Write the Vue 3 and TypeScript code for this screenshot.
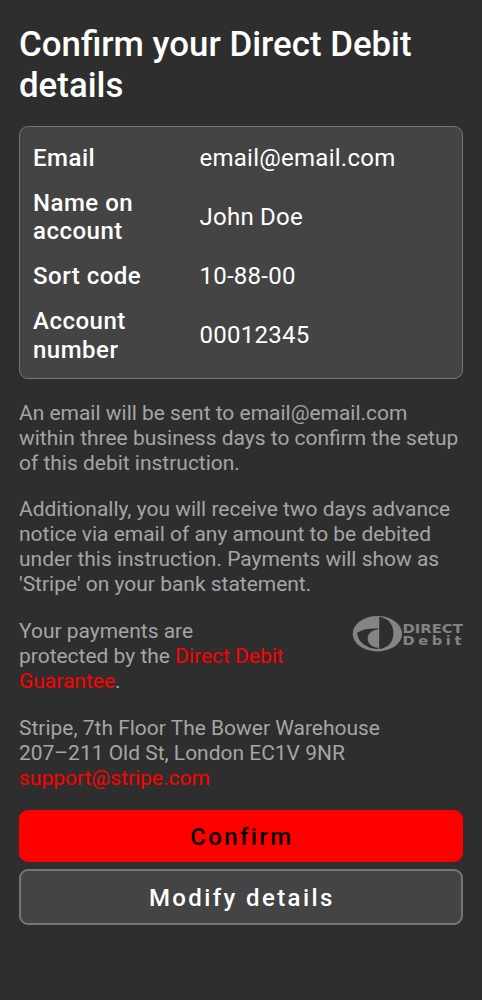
<script setup lang="ts">
interface Detail {
  label: string
  value: string
}

const details: Detail[] = [
  { label: 'Email', value: 'email@email.com' },
  { label: 'Name on account', value: 'John Doe' },
  { label: 'Sort code', value: '10-88-00' },
  { label: 'Account number', value: '00012345' },
]
</script>

<template>
  <main class="page">
    <h1 class="title">Confirm your Direct Debit details</h1>

    <dl class="card">
      <div v-for="d in details" :key="d.label" class="row">
        <dt>{{ d.label }}</dt>
        <dd>{{ d.value }}</dd>
      </div>
    </dl>

    <p class="text">
      An email will be sent to email@email.com<br />within three business days to confirm the setup<br />of this debit instruction.
    </p>
    <p class="text">
      Additionally, you will receive two days advance<br />notice via email of any amount to be debited<br />under this instruction. Payments will show as<br />'Stripe' on your bank statement.
    </p>

    <div class="guarantee">
      <p class="text">
        Your payments are<br />protected by the <a>Direct Debit<br />Guarantee</a>.
      </p>
      <svg class="logo" width="118" height="40" viewBox="0 0 118 40" role="img" aria-label="Direct Debit">
        <ellipse cx="26.4" cy="17.7" rx="24.7" ry="17.7" fill="#848484" />
        <path d="M28.2 .8C37.5 2 42.4 9 42.4 17.5C42.4 26 37 32 28.2 33Z" fill="#2e2e2e" />
        <path d="M6.1 16.8C11 13.3 19 12 27.2 12.6V13.4C20.6 14 16.7 17.5 16.7 22.5C16.7 27.5 20.6 31.2 27.2 31.8V33C16 33 6.6 26 6.1 16.8Z" fill="#2e2e2e" />
        <text class="direct" x="51.5" y="16.6" textLength="60.3" lengthAdjust="spacingAndGlyphs">DIRECT</text>
        <text class="debit" transform="translate(51.5 28.8) scale(1.2 1)">Debit</text>
      </svg>
    </div>

    <p class="text">
      Stripe, 7th Floor The Bower Warehouse<br />207–211 Old St, London EC1V 9NR<br /><a>support@stripe.com</a>
    </p>

    <div class="actions">
      <button class="btn primary" type="button">Confirm</button>
      <button class="btn secondary" type="button">Modify details</button>
    </div>
  </main>
</template>

<style>
html,
body {
  background: #2e2e2e;
}
body {
  margin: 0;
}
</style>

<style scoped>
.page {
  box-sizing: border-box;
  min-height: 1000px;
  padding: 24px 19px 0;
  background: #2e2e2e;
  color: #fff;
  font-family: Roboto, 'Liberation Sans', sans-serif;
}
.title {
  margin: 0 0 20px;
  font-size: 34.85px;
  line-height: 41px;
  font-weight: 500;
}
.card {
  box-sizing: border-box;
  height: 252.5px;
  margin: 0 0 22.2px;
  padding: 17px 13px;
  border: 1px solid #74747b;
  border-radius: 9px;
  background: #444;
  display: flex;
  flex-direction: column;
  gap: 16px;
  font-size: 24px;
  line-height: 28.7px;
}
.row {
  display: grid;
  grid-template-columns: 150px 1fr;
  column-gap: 16.5px;
  align-items: center;
}
dt {
  font-weight: 500;
  width: 125px;
  letter-spacing: 0.5px;
}
dd {
  margin: 0;
  letter-spacing: 0.25px;
}
.text {
  margin: 0 0 21.7px;
  font-size: 20.97px;
  line-height: 25px;
  color: #a5a5a5;
  white-space: nowrap;
}
.text a {
  color: #f00;
}
.guarantee {
  display: flex;
  justify-content: space-between;
}
.logo {
  margin: -3.4px -6px 0 0;
}
.logo text {
  font-family: 'DejaVu Sans', sans-serif;
  font-weight: 700;
  fill: #848484;
}
.logo .direct {
  font-size: 12.6px;
}
.logo .debit {
  font-size: 12.2px;
  letter-spacing: 3px;
}
.actions {
  display: flex;
  flex-direction: column;
  gap: 7.3px;
  margin-top: -2.5px;
}
.btn {
  box-sizing: border-box;
  width: 100%;
  margin: 0;
  padding: 2px 0 0 1.6px;
  border: 0;
  border-radius: 9px;
  font: 500 24px/28px Roboto, sans-serif;
  letter-spacing: 2.38px;
}
.primary {
  height: 51.7px;
  background: #f00;
  color: #000;
}
.secondary {
  height: 56px;
  border: 2px solid #74747b;
  background: #444;
  color: #fff;
}
</style>
